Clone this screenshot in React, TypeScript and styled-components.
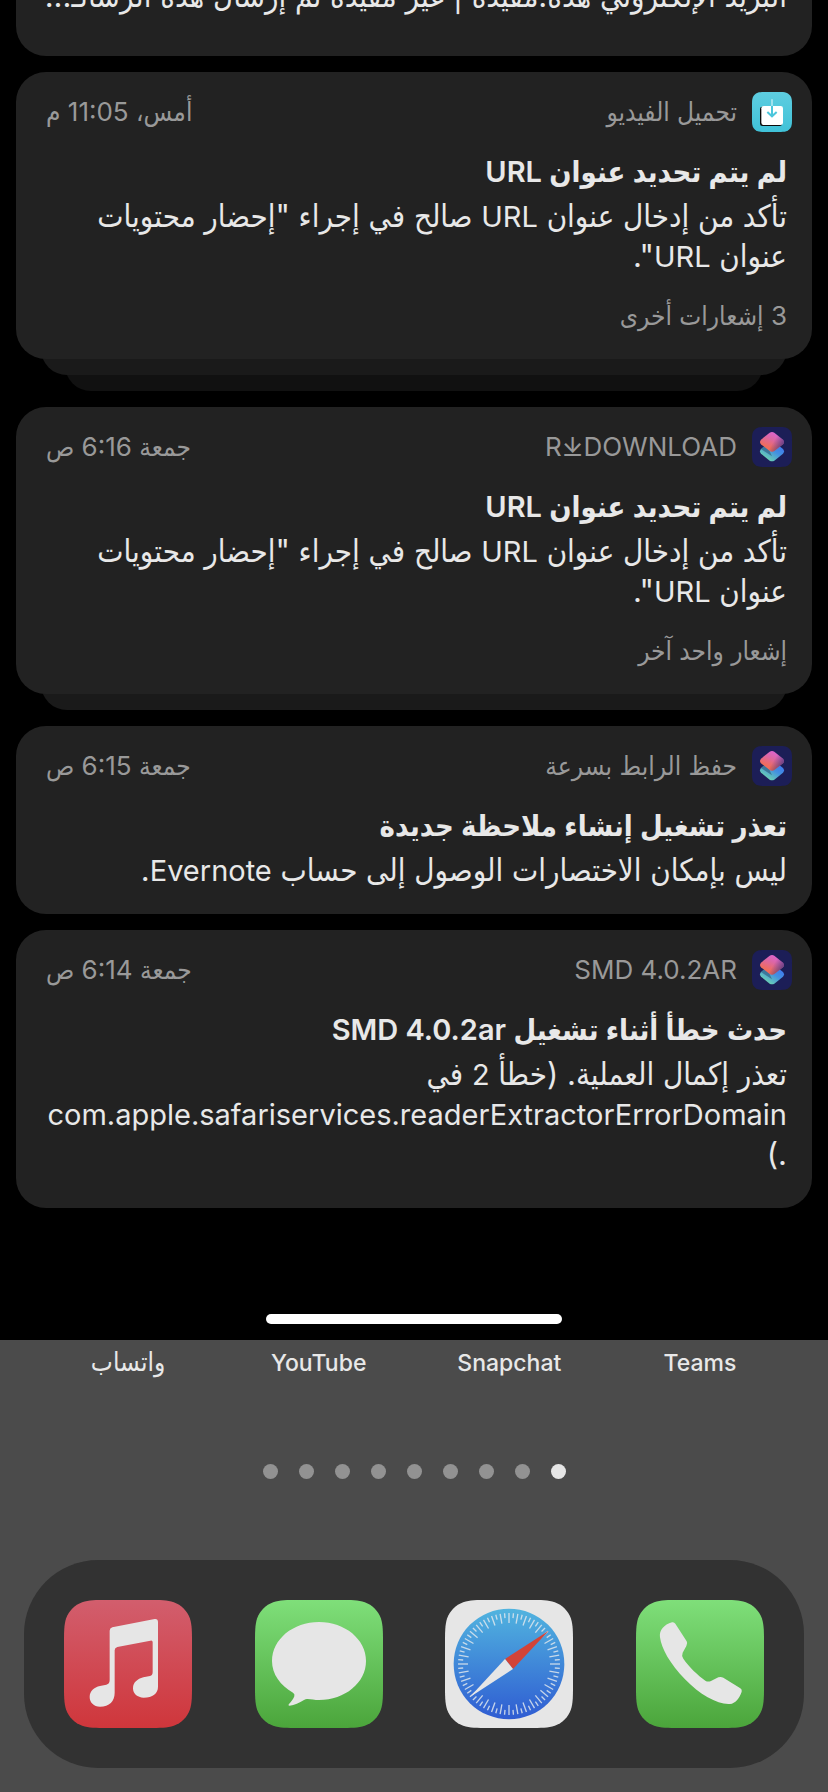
import React from "react";
import styled, { createGlobalStyle } from "styled-components";

const GlobalStyle = createGlobalStyle`
  *, *::before, *::after { box-sizing: border-box; }
  html { background: #4b4b4b; }
  body {
    margin: 0;
    font-family: Inter, "DejaVu Sans Condensed", "DejaVu Sans", sans-serif;
    color: #e8e8e8;
  }
  h2, p, ul { margin: 0; padding: 0; }
  button { border: 0; padding: 0; background: none; font: inherit; color: inherit; cursor: pointer; }
`;

const Screen = styled.div`
  width: 100%;
  overflow: hidden;
`;

const Center = styled.main`
  background: #000;
  overflow: hidden;
  padding-bottom: 16px;
`;

/* The list is scrolled, so its first card starts above the window. */
const List = styled.div`
  display: flex;
  flex-direction: column;
  gap: 16px;
  margin-top: -24px;
  padding: 0 16px;
`;

const Stack = styled.div`
  position: relative;
  z-index: 0;
`;

const Card = styled.article<{ $bottom: number }>`
  position: relative;
  z-index: 2;
  padding: 20px 25px ${(p) => p.$bottom}px 30px;
  border-radius: 30px;
  background: #222;
`;

const CutCard = styled(Card)`
  padding-top: 0;
  border-radius: 0 0 30px 30px;
`;

const Layer = styled.div<{ $depth: number }>`
  position: relative;
  z-index: ${(p) => 2 - p.$depth};
  height: 44px;
  margin: -28px ${(p) => 1 + p.$depth * 24}px 0;
  border-radius: 0 0 26px 26px;
  background: ${(p) => (p.$depth === 1 ? "#1a1a1a" : "#111")};
`;

/* Latin runs are set smaller than the Arabic text around them. */
const Latin = styled.span<{ $size: number }>`
  font-size: ${(p) => p.$size}px;
  line-height: 1;
`;

const Header = styled.header`
  display: flex;
  align-items: center;
  gap: 15px;
  height: 40px;
  margin-inline-start: -5px;
  color: #999;
  font-size: 26px;
  line-height: 32px;
  white-space: nowrap;

  svg { width: 40px; height: 40px; flex: none; }
  time { margin-inline-start: auto; }
`;

const Title = styled.h2`
  margin: 20px 0 4px;
  font-size: 29px;
  font-weight: 600;
  line-height: 40px;
  white-space: nowrap;
`;

const Body = styled.p`
  font-size: 31px;
  line-height: 40px;
  white-space: pre;
`;

const More = styled.p`
  margin-top: 24px;
  color: #999;
  font-size: 26px;
  line-height: 32px;
`;

const HomeBar = styled.div`
  width: 296px;
  height: 10px;
  margin: 106px auto 0;
  border-radius: 5px;
  background: #fff;
`;

const Home = styled.section`
  padding: 8px 24px 24px;
  background: #4b4b4b;
`;

const AppRow = styled.ul`
  display: flex;
  justify-content: space-between;
  padding: 0 40px;
  list-style: none;
`;

const AppLabel = styled.li`
  width: 128px;
  text-align: center;
  font-size: 26px;
  font-weight: 500;
  line-height: 28px;
`;

const Dots = styled.nav`
  display: flex;
  justify-content: center;
  gap: 21px;
  margin: 88px 0 81px;
`;

const Dot = styled.button<{ $on: boolean }>`
  width: 15px;
  height: 15px;
  border-radius: 50%;
  background: ${(p) => (p.$on ? "#e6e6e6" : "#929292")};
`;

const Dock = styled.nav`
  display: flex;
  justify-content: space-between;
  padding: 40px;
  border-radius: 74px;
  background: #323232;
`;

const DockButton = styled.button`
  width: 128px;
  height: 128px;

  svg { display: block; width: 128px; height: 128px; }
`;

function Mixed({ text, latin }: { text: string; latin: number }) {
  return (
    <>
      {text.split(/([A-Za-z0-9](?:[A-Za-z0-9.:⤓ ]*[A-Za-z0-9])?)/).map((part, i) =>
        i % 2 ? <Latin key={i} $size={latin}>{part}</Latin> : part
      )}
    </>
  );
}

/* Continuous-corner rounded square, the outline every app icon uses. */
function squircle(x: number, y: number, s: number) {
  const r = s * 0.225;
  const k = [1.528665, 1.088493, 0.868407, 0.631494, 0.372824, 0.16906, 0.074911].map((v) => v * r);
  const corner = (ox: number, oy: number, ax: number, ay: number, reverse: boolean) => {
    const pts = [
      [k[0], 0], [k[1], 0], [k[2], 0], [k[3], k[6]],
      [k[4], k[5]], [k[5], k[4]], [k[6], k[3]],
      [0, k[2]], [0, k[1]], [0, k[0]],
    ];
    if (reverse) pts.reverse();
    const p = pts.map(([a, b]) => `${ox + ax * a} ${oy + ay * b}`);
    return `L${p[0]} C${p[1]} ${p[2]} ${p[3]} C${p[4]} ${p[5]} ${p[6]} C${p[7]} ${p[8]} ${p[9]}`;
  };
  const path =
    corner(x + s, y, -1, 1, false) +
    corner(x + s, y + s, -1, -1, true) +
    corner(x, y + s, 1, -1, false) +
    corner(x, y, 1, 1, true);
  return "M" + path.slice(1) + "Z";
}

function Gradient({ id, from, to }: { id: string; from: string; to: string }) {
  return (
    <linearGradient id={id} x1="0" y1="0" x2="0" y2="1">
      <stop offset="0" stopColor={from} />
      <stop offset="1" stopColor={to} />
    </linearGradient>
  );
}

function VideoIcon() {
  return (
    <svg viewBox="0 0 120 120" aria-hidden="true">
      <defs><Gradient id="video" from="#5ecde0" to="#40c2d8" /></defs>
      <path d={squircle(0, 0, 120)} fill="url(#video)" />
      <rect x="24" y="44" width="66" height="58" rx="7" fill="#0b0b0b" />
      <rect x="28" y="42" width="65" height="57" rx="7" fill="#fff" />
      <path d="M60 22V42" stroke="#c8eef5" strokeWidth="4" />
      <path d="M60 42V72M46 60L60 73L74 60" fill="none" stroke="#4cc6dc" strokeWidth="6" />
    </svg>
  );
}

function ShortcutsIcon({ id }: { id: string }) {
  return (
    <svg viewBox="0 0 120 120" aria-hidden="true">
      <defs>
        <linearGradient id={`${id}-low`} x1="1" y1="0" x2="0.2" y2="1">
          <stop offset="0.2" stopColor="#3f78ee" />
          <stop offset="0.5" stopColor="#4390e0" />
          <stop offset="1" stopColor="#74e0a8" />
        </linearGradient>
        <linearGradient id={`${id}-top`} x1="0.8" y1="0" x2="0.3" y2="1">
          <stop offset="0" stopColor="#dc63dc" />
          <stop offset="0.4" stopColor="#dc67a4" />
          <stop offset="0.8" stopColor="#f06c5c" />
        </linearGradient>
        <linearGradient id={`${id}-shade`} x1="0.6" y1="0.4" x2="1" y2="0.6">
          <stop offset="0" stopColor="#47357a" stopOpacity="0" />
          <stop offset="1" stopColor="#47357a" stopOpacity="0.8" />
        </linearGradient>
      </defs>
      <path d={squircle(0, 0, 120)} fill="#1c1e57" />
      <path d="M53 45Q60 41 67 45L93 66Q99 73 93 80L67 101Q60 105 53 101L27 80Q21 73 27 66Z" fill={`url(#${id}-low)`} />
      <path d="M27 66L60 88L44 53Z" fill="#29506f" opacity="0.55" />
      <path d="M53 17Q60 13 67 17L93 38Q99 45 93 52L67 72Q60 76 53 72L27 52Q21 45 27 38Z" fill={`url(#${id}-top)`} />
      <path d="M53 17Q60 13 67 17L93 38Q99 45 93 52L67 72Q60 76 53 72L27 52Q21 45 27 38Z" fill={`url(#${id}-shade)`} />
    </svg>
  );
}

function MusicIcon() {
  return (
    <svg viewBox="42 30 384 384" aria-hidden="true">
      <defs><Gradient id="music" from="#d25e6d" to="#cf363b" /></defs>
      <path d={squircle(42, 30, 384)} fill="url(#music)" />
      <path
        fill="#e6e6e6"
        d="M179 122Q179 114 187 112L314 87Q324 86 324 96V290C324 310 308 323 281 323C262 323 249 311 249 295C249 277 262 267 280 262L300 258Q308 256 308 246V157Q308 150 301 152L202 171Q194 173 194 181V308C194 334 178 350 150 350C131 350 119 337 119 321C119 303 132 292 150 288L169 284Q179 282 179 270Z"
      />
    </svg>
  );
}

function MessagesIcon() {
  return (
    <svg viewBox="42 30 384 384" aria-hidden="true">
      <defs><Gradient id="messages" from="#7fdf7a" to="#4ba53b" /></defs>
      <path d={squircle(42, 30, 384)} fill="url(#messages)" />
      <path
        fill="#e6e6e6"
        d="M234 96C312 96 375 148 375 213C375 278 312 330 234 330C221 330 210 328 200 327Q195 326 189 330C175 339 160 346 146 347Q140 347 144 342C152 334 157 327 160 319Q162 312 156 308C118 287 93 252 93 213C93 148 156 96 234 96Z"
      />
    </svg>
  );
}

function PhoneIcon() {
  return (
    <svg viewBox="48 30 384 384" aria-hidden="true">
      <defs><Gradient id="phone" from="#7fdf7a" to="#4ba53b" /></defs>
      <path d={squircle(48, 30, 384)} fill="url(#phone)" />
      <path
        fill="#e6e6e6"
        d="M120 142C117 121 132 104 156 97Q162 95 166 101L200 154Q204 160 199 168L188 188Q184 197 190 206C208 232 233 255 256 272Q264 277 273 273L295 262Q303 259 310 263L361 295Q367 299 365 305C358 325 346 340 330 342C295 345 240 315 195 268C150 222 124 175 120 142Z"
      />
    </svg>
  );
}

function SafariIcon() {
  return (
    <svg viewBox="48 30 384 384" aria-hidden="true">
      <defs><Gradient id="safari" from="#51b4df" to="#2f5cd2" /></defs>
      <path d={squircle(48, 30, 384)} fill="#e6e6e6" />
      <circle cx="240" cy="222" r="166" fill="url(#safari)" />
      {Array.from({ length: 72 }, (_, i) => (
        <line
          key={i}
          x1="240"
          x2="240"
          y1="69"
          y2={i % 2 ? 84 : 99}
          stroke="#dfe7ee"
          strokeWidth="4"
          opacity="0.85"
          transform={`rotate(${i * 5} 240 222)`}
        />
      ))}
      <path d="M359 122L228 207L252 237Z" fill="#d34338" />
      <path d="M122 322L228 207L252 237Z" fill="#e6e6e6" />
    </svg>
  );
}

type Note = {
  app: string;
  time: string;
  title: string;
  body: string;
  more?: string;
  layers: number;
  bottom: number;
  shortcuts: boolean;
};

const notes: Note[] = [
  {
    app: "تحميل الفيديو",
    time: "أمس، 11:05 م",
    title: "لم يتم تحديد عنوان URL",
    body: "تأكد من إدخال عنوان URL صالح في إجراء \"إحضار محتويات\nعنوان URL\".",
    more: "3 إشعارات أخرى",
    layers: 2,
    bottom: 27,
    shortcuts: false,
  },
  {
    app: "R⤓DOWNLOAD",
    time: "جمعة 6:16 ص",
    title: "لم يتم تحديد عنوان URL",
    body: "تأكد من إدخال عنوان URL صالح في إجراء \"إحضار محتويات\nعنوان URL\".",
    more: "إشعار واحد آخر",
    layers: 1,
    bottom: 27,
    shortcuts: true,
  },
  {
    app: "حفظ الرابط بسرعة",
    time: "جمعة 6:15 ص",
    title: "تعذر تشغيل إنشاء ملاحظة جديدة",
    body: "ليس بإمكان الاختصارات الوصول إلى حساب Evernote.",
    layers: 0,
    bottom: 24,
    shortcuts: true,
  },
  {
    app: "SMD 4.0.2AR",
    time: "جمعة 6:14 ص",
    title: "حدث خطأ أثناء تشغيل SMD 4.0.2ar",
    body: "تعذر إكمال العملية. (خطأ 2 في\ncom.apple.safariservices.readerExtractorErrorDomain\n.)",
    layers: 0,
    bottom: 34,
    shortcuts: true,
  },
];

const dock = [
  { name: "الهاتف", icon: <PhoneIcon /> },
  { name: "Safari", icon: <SafariIcon /> },
  { name: "الرسائل", icon: <MessagesIcon /> },
  { name: "الموسيقى", icon: <MusicIcon /> },
];

function Notification({ note, id }: { note: Note; id: string }) {
  return (
    <Stack>
      <Card $bottom={note.bottom}>
        <Header>
          {note.shortcuts ? <ShortcutsIcon id={id} /> : <VideoIcon />}
          <span>{note.app}</span>
          <time>{note.time}</time>
        </Header>
        <Title>{note.title}</Title>
        <Body><Mixed text={note.body} latin={29} /></Body>
        {note.more && <More>{note.more}</More>}
      </Card>
      {Array.from({ length: note.layers }, (_, i) => (
        <Layer key={i} $depth={i + 1} />
      ))}
    </Stack>
  );
}

export default function App() {
  return (
    <Screen dir="rtl" lang="ar">
      <GlobalStyle />
      <Center>
        <List>
          <CutCard $bottom={40}>
            <Body>البريد الإلكتروني هذه.مفيدة | غير مفيدة تم إرسال هذه الرسالـ...</Body>
          </CutCard>
          {notes.map((note, i) => (
            <Notification key={i} note={note} id={`note${i}`} />
          ))}
        </List>
        <HomeBar />
      </Center>
      <Home>
        <AppRow>
          {["Teams", "Snapchat", "YouTube", "واتساب"].map((name) => (
            <AppLabel key={name}><Mixed text={name} latin={23} /></AppLabel>
          ))}
        </AppRow>
        <Dots aria-label="الصفحات">
          {Array.from({ length: 9 }, (_, i) => (
            <Dot key={i} $on={i === 0} aria-label={`صفحة ${i + 1}`} />
          ))}
        </Dots>
        <Dock aria-label="Dock">
          {dock.map((app) => (
            <DockButton key={app.name} aria-label={app.name}>{app.icon}</DockButton>
          ))}
        </Dock>
      </Home>
    </Screen>
  );
}
